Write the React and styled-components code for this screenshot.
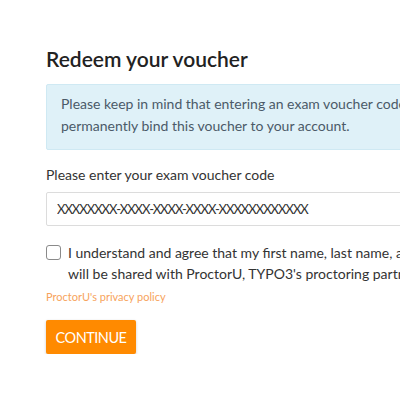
import React from "react";
import styled, { createGlobalStyle } from "styled-components";

const Global = createGlobalStyle`
  html, body { margin: 0; padding: 0; background: #fff; overflow: hidden; }
  body { font-family: Lato, "Noto Sans", sans-serif; }
`;

const Page = styled.div`
  width: 560px;
  padding: 44px 0 0 46px;
  box-sizing: border-box;
`;

const Title = styled.h2`
  margin: 0 0 10px;
  font-size: 21px;
  font-weight: 600;
  color: #222;
  line-height: 30px;
`;

const Notice = styled.div`
  background: #dff1f8;
  border: 1px solid #cfe9f3;
  border-radius: 2px;
  padding: 8px 14px 12px 14px;
  font-size: 14px;
  line-height: 22px;
  color: #4b5a68;
  white-space: nowrap;
  margin-bottom: 15px;
`;

const Label = styled.label`
  display: block;
  font-size: 14px;
  color: #333;
  line-height: 20px;
  margin-bottom: 7px;
`;

const Input = styled.input`
  display: block;
  width: 100%;
  box-sizing: border-box;
  height: 34px;
  border: 1px solid #dcdcdc;
  border-radius: 2px;
  padding: 0 10px;
  font-family: Lato, "Noto Sans", sans-serif;
  font-size: 13px;
  color: #333;
  letter-spacing: -1px;
  margin-bottom: 16px;
  outline: none;
`;

const CheckRow = styled.label`
  display: flex;
  align-items: flex-start;
  gap: 7px;
  font-size: 14px;
  line-height: 21px;
  color: #333;
  white-space: nowrap;
`;

const Box = styled.span`
  flex: none;
  width: 13px;
  height: 13px;
  margin-top: 3px;
  border: 1px solid #8a8a8a;
  border-radius: 3px;
  background: #fff;
`;

const Link = styled.a`
  display: block;
  margin-top: 5px;
  font-size: 11px;
  line-height: 16px;
  color: #f7a35c;
  text-decoration: none;
`;

const Button = styled.button`
  display: block;
  margin-top: 15px;
  width: 90px;
  height: 34px;
  padding: 0;
  background: #ff8a00;
  color: #fff;
  border: none;
  border-radius: 2px;
  font-family: Lato, "Noto Sans", sans-serif;
  font-size: 14.5px;
  letter-spacing: -0.5px;
  box-shadow: 0 1px 3px rgba(0,0,0,0.2);
`;

export default function App() {
  return (
    <>
      <Global />
      <Page>
        <Title>Redeem your voucher</Title>
        <Notice>
          Please keep in mind that entering an exam voucher code will
          <br />
          permanently bind this voucher to your account.
        </Notice>
        <Label>Please enter your exam voucher code</Label>
        <Input defaultValue="XXXXXXXX-XXXX-XXXX-XXXX-XXXXXXXXXXXX" />
        <CheckRow>
          <Box />
          <span>
            I understand and agree that my first name, last name, and email address
            <br />
            will be shared with ProctorU, TYPO3's proctoring partner.
          </span>
        </CheckRow>
        <Link href="#">ProctorU's privacy policy</Link>
        <Button>CONTINUE</Button>
      </Page>
    </>
  );
}
